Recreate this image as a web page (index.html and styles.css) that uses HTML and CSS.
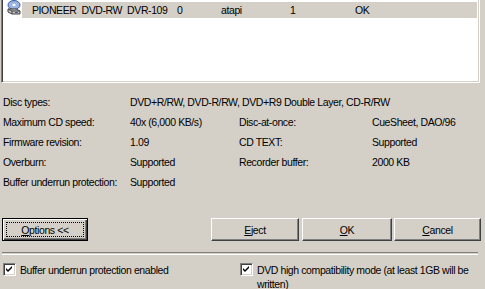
FILE: index.html
```html
<!DOCTYPE html>
<html>
<head>
<meta charset="utf-8">
<link rel="stylesheet" href="styles.css">
</head>
<body>
<div class="dialog">
  <div class="listbox">
    <div class="row">
      <span class="icon">
        <svg width="16" height="16" viewBox="0 0 16 16">
          <ellipse cx="8" cy="5" rx="6" ry="4.5" fill="#9db4e0" stroke="#3a5aa8" stroke-width="1"/>
          <ellipse cx="8" cy="5" rx="1.6" ry="1.2" fill="#fff"/>
          <path d="M2 9 L10 9 L14 11 L14 14 L6 14 L2 12 Z" fill="#c8c8c8" stroke="#404040" stroke-width="1"/>
          <path d="M2 9 L6 11 L14 11" fill="none" stroke="#404040" stroke-width="1"/>
          <path d="M6 11 L6 14" stroke="#404040" stroke-width="1"/>
          <rect x="9" y="12" width="3" height="1" fill="#3a5aa8"/>
        </svg>
      </span>
      <span class="cells">
        <span class="c1">PIONEER&nbsp; DVD-RW&nbsp; DVR-109</span>
        <span class="c2">0</span>
        <span class="c3">atapi</span>
        <span class="c4">1</span>
        <span class="c5">OK</span>
      </span>
    </div>
  </div>

  <div class="info">
    <span>Disc types:</span><span class="span3">DVD+R/RW, DVD-R/RW, DVD+R9 Double Layer, CD-R/RW</span>
    <span>Maximum CD speed:</span><span>40x (6,000 KB/s)</span><span>Disc-at-once:</span><span>CueSheet, DAO/96</span>
    <span>Firmware revision:</span><span>1.09</span><span>CD TEXT:</span><span>Supported</span>
    <span>Overburn:</span><span>Supported</span><span>Recorder buffer:</span><span>2000 KB</span>
    <span>Buffer underrun protection:</span><span>Supported</span><span></span><span></span>
  </div>

  <div class="buttons">
    <div class="btn default"><span class="focus"><u>O</u>ptions &lt;&lt;</span></div>
    <div class="right">
      <div class="btn eject"><span class="lbl"><u>E</u>ject</span></div>
      <div class="btn ok"><span class="lbl"><u>O</u>K</span></div>
      <div class="btn cancel"><span class="lbl"><u>C</u>ancel</span></div>
    </div>
  </div>

  <div class="sep"></div>

  <div class="checks">
    <label class="chk c-left"><span class="box"><svg width="9" height="9" viewBox="0 0 9 9"><path d="M1 3 L3 5 L7 1 L7 3 L3 7 L1 5 Z" fill="#000"/></svg></span><span>Buffer underrun protection enabled</span></label>
    <label class="chk c-right"><span class="box"><svg width="9" height="9" viewBox="0 0 9 9"><path d="M1 3 L3 5 L7 1 L7 3 L3 7 L1 5 Z" fill="#000"/></svg></span><span class="wrap">DVD high compatibility mode (at least 1GB will be written)</span></label>
  </div>
</div>
</body>
</html>
```

FILE: styles.css
```css
html, body {
  margin: 0;
  padding: 0;
  background: #d4d0c8;
}
body {
  font-family: "Liberation Sans", Arial, sans-serif;
  font-size: 10.5px;
  letter-spacing: -0.4px;
  color: #000;
  width: 485px;
  height: 289px;
  overflow: hidden;
}
.dialog {
  display: flex;
  flex-direction: column;
}
.listbox {
  margin-left: 1px;
  width: 479px;
  height: 83px;
  box-sizing: border-box;
  background: #fff;
  border-left: 1px solid #808080;
  border-right: 1px solid #fff;
  border-bottom: 1px solid #fff;
  box-shadow: inset 1px 0 0 #404040, inset -1px 0 0 #d4d0c8, inset 0 -1px 0 #d4d0c8;
  padding: 0 2px 0 2px;
}
.row {
  display: flex;
  align-items: center;
  height: 18px;
}
.icon {
  width: 16px;
  height: 16px;
  margin-left: 2px;
  margin-top: -2px;
  display: block;
}
.icon svg { display: block; }
.cells {
  display: flex;
  align-items: center;
  margin-top: 2px;
  height: 16px;
  flex: 1;
  background: #d4d0c8;
  padding-left: 10px;
}
.cells span { white-space: nowrap; }
.c1 { width: 145px; }
.c2 { width: 44px; }
.c3 { width: 69px; }
.c4 { width: 65px; }

.info {
  display: grid;
  grid-template-columns: 127px 109px 133px auto;
  grid-auto-rows: 20px;
  align-items: center;
  padding-left: 3px;
  margin-top: 9px;
}
.info span { white-space: nowrap; }
.span3 { grid-column: 2 / 5; }

.buttons {
  display: flex;
  justify-content: space-between;
  margin-top: 26px;
  padding: 0 4px 0 2px;
}
.right {
  display: flex;
}
.btn {
  height: 23px;
  box-sizing: border-box;
  background: #d4d0c8;
  border-top: 1px solid #fff;
  border-left: 1px solid #fff;
  border-right: 1px solid #404040;
  border-bottom: 1px solid #404040;
  box-shadow: inset -1px -1px 0 #808080;
  display: flex;
  align-items: center;
  justify-content: center;
}
.btn.default {
  width: 86px;
  border: 1px solid #000;
  box-shadow: inset 1px 1px 0 #fff, inset -1px -1px 0 #404040, inset -2px -2px 0 #808080;
  padding: 3px;
}
.focus {
  flex: 1;
  align-self: stretch;
  display: flex;
  align-items: center;
  justify-content: center;
  outline: 1px dotted #000;
  outline-offset: -1px;
}
.eject { width: 88px; }
.ok { width: 90px; margin-left: 3px; }
.cancel { width: 87px; margin-left: 2px; }

.sep {
  margin: 11px 7px 0 2px;
  height: 1px;
  border-top: 1px solid #808080;
  border-bottom: 1px solid #fff;
}

.checks {
  display: flex;
  margin-top: 8px;
  padding-left: 3px;
}
.chk {
  display: flex;
  align-items: flex-start;
  gap: 4px;
  line-height: 14px;
}
.c-left { width: 237px; }
.c-right { width: 230px; }
.wrap { max-width: 216px; }
.box {
  flex: none;
  width: 13px;
  height: 13px;
  box-sizing: border-box;
  background: #fff;
  border-top: 1px solid #808080;
  border-left: 1px solid #808080;
  border-right: 1px solid #fff;
  border-bottom: 1px solid #fff;
  box-shadow: inset 1px 1px 0 #404040, inset -1px -1px 0 #d4d0c8;
  display: flex;
  align-items: center;
  justify-content: center;
}
.box svg { display: block; }
```
